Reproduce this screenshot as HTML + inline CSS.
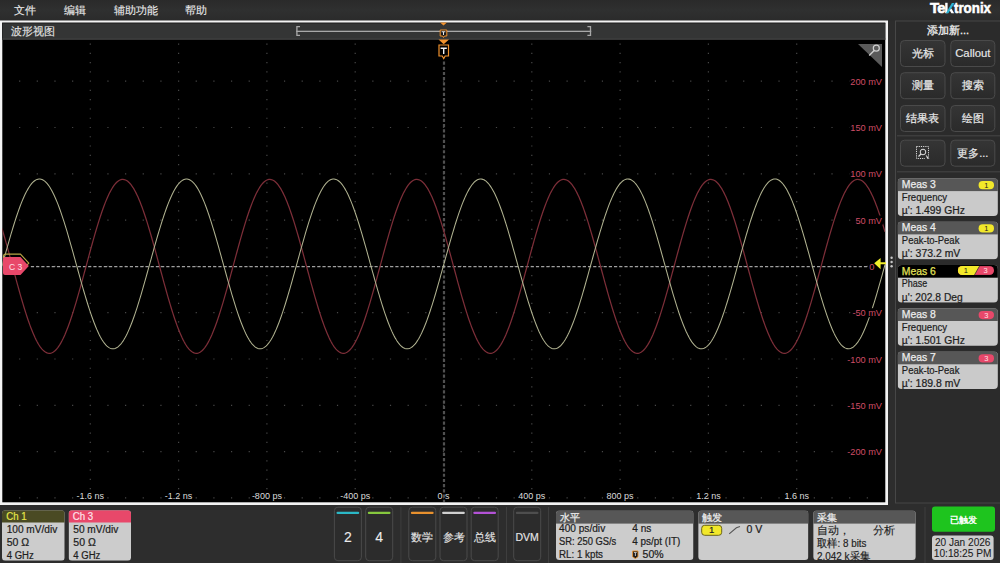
<!DOCTYPE html>
<html><head><meta charset="utf-8"><title>Tektronix scope</title>
<style>
*{margin:0;padding:0}
html,body{width:1000px;height:563px;overflow:hidden;background:#2d2d2d}
body{font-family:"Liberation Sans",sans-serif}
svg{display:block;position:absolute;left:0;top:0}
text{font-family:"Liberation Sans",sans-serif}
</style></head><body>
<svg width="1000" height="563" viewBox="0 0 1000 563" font-family="Liberation Sans, sans-serif"><defs>
<linearGradient id="gmenu" x1="0" y1="0" x2="0" y2="1"><stop offset="0" stop-color="#2a2a2a"/><stop offset="0.5" stop-color="#2f3030"/><stop offset="1" stop-color="#2b2b2b"/></linearGradient>
<linearGradient id="gbtn" x1="0" y1="0" x2="0" y2="1"><stop offset="0" stop-color="#353535"/><stop offset="1" stop-color="#2a2a2a"/></linearGradient>
<clipPath id="cgrat"><rect x="2.3" y="39.6" width="882.9" height="462.6"/></clipPath>
</defs>
<rect x="0" y="0" width="1000" height="563" fill="#2d2d2d"/>
<rect x="0" y="0" width="1000" height="20.5" fill="url(#gmenu)"/>
<text x="14.2" y="14.2" font-size="10.7" fill="#e8e8e8" stroke="#e8e8e8" stroke-width="0.12">文件</text>
<text x="64.2" y="14.2" font-size="10.7" fill="#e8e8e8" stroke="#e8e8e8" stroke-width="0.12">编辑</text>
<text x="114" y="14.2" font-size="10.7" fill="#e8e8e8" stroke="#e8e8e8" stroke-width="0.12">辅助功能</text>
<text x="184.8" y="14.2" font-size="10.7" fill="#e8e8e8" stroke="#e8e8e8" stroke-width="0.12">帮助</text>
<text x="929.9" y="13.2" font-size="15" fill="#ffffff" font-weight="bold" letter-spacing="-0.6" stroke="#ffffff" stroke-width="0.55">Te</text>
<rect x="945.2" y="2.8" width="2.4" height="10.4" fill="#ffffff"/>
<path d="M945.8 13.2H948.4L954.5 2.9H951.9Z" fill="#2ab4d4"/>
<path d="M949.6 10.2L951.4 8.4L954.2 13.2H951.4Z" fill="#ffffff"/>
<text x="954" y="13.2" font-size="15" fill="#ffffff" font-weight="bold" stroke="#ffffff" stroke-width="0.55" textLength="37" lengthAdjust="spacingAndGlyphs">tronix</text>
<rect x="0" y="20.5" width="888" height="484.5" fill="#f4f4f4"/>
<rect x="2.3" y="22.8" width="883" height="479.5" fill="#000"/>
<rect x="2.3" y="22.8" width="883" height="17" fill="#343535"/>
<rect x="2.3" y="22.8" width="883" height="0.6" fill="#1a1a1a"/>
<rect x="2.3" y="22.8" width="0.6" height="17" fill="#1a1a1a"/>
<rect x="2.3" y="38.4" width="883" height="1.2" fill="#3f3f3f"/>
<text x="10.6" y="34.9" font-size="11" fill="#e2e2e2" stroke="#e2e2e2" stroke-width="0.15">波形视图</text>
<rect x="296.2" y="30.7" width="295" height="1.3" fill="#a8a8a8"/>
<path d="M300 26.6H296.9V35.4H300M587.4 26.6H590.5V35.4H587.4" fill="none" stroke="#a8a8a8" stroke-width="1.3"/>
<path d="M440 22.6H447L443.5 25.6Z" fill="#f0922e"/>
<path d="M440.2 30H446.8V36H444.5L443.5 37.5L442.5 36H440.2Z" fill="#1a1a1a" stroke="#f0922e" stroke-width="1"/>
<path d="M441.6 31.3H445.4V32.2H444V35H443V32.2H441.6Z" fill="#e6e6e6"/>
<g clip-path="url(#cgrat)">
<path d="M1.4 43.56h1.2v1.2h-1.2zM1.4 52.82h1.2v1.2h-1.2zM1.4 62.08h1.2v1.2h-1.2zM1.4 71.34h1.2v1.2h-1.2zM1.4 80.6h1.2v1.2h-1.2zM1.4 89.86h1.2v1.2h-1.2zM1.4 99.12h1.2v1.2h-1.2zM1.4 108.38h1.2v1.2h-1.2zM1.4 117.64h1.2v1.2h-1.2zM1.4 126.9h1.2v1.2h-1.2zM1.4 136.16h1.2v1.2h-1.2zM1.4 145.42h1.2v1.2h-1.2zM1.4 154.68h1.2v1.2h-1.2zM1.4 163.94h1.2v1.2h-1.2zM1.4 173.2h1.2v1.2h-1.2zM1.4 182.46h1.2v1.2h-1.2zM1.4 191.72h1.2v1.2h-1.2zM1.4 200.98h1.2v1.2h-1.2zM1.4 210.24h1.2v1.2h-1.2zM1.4 219.5h1.2v1.2h-1.2zM1.4 228.76h1.2v1.2h-1.2zM1.4 238.02h1.2v1.2h-1.2zM1.4 247.28h1.2v1.2h-1.2zM1.4 256.54h1.2v1.2h-1.2zM1.4 265.8h1.2v1.2h-1.2zM1.4 275.06h1.2v1.2h-1.2zM1.4 284.32h1.2v1.2h-1.2zM1.4 293.58h1.2v1.2h-1.2zM1.4 302.84h1.2v1.2h-1.2zM1.4 312.1h1.2v1.2h-1.2zM1.4 321.36h1.2v1.2h-1.2zM1.4 330.62h1.2v1.2h-1.2zM1.4 339.88h1.2v1.2h-1.2zM1.4 349.14h1.2v1.2h-1.2zM1.4 358.4h1.2v1.2h-1.2zM1.4 367.66h1.2v1.2h-1.2zM1.4 376.92h1.2v1.2h-1.2zM1.4 386.18h1.2v1.2h-1.2zM1.4 395.44h1.2v1.2h-1.2zM1.4 404.7h1.2v1.2h-1.2zM1.4 413.96h1.2v1.2h-1.2zM1.4 423.22h1.2v1.2h-1.2zM1.4 432.48h1.2v1.2h-1.2zM1.4 441.74h1.2v1.2h-1.2zM1.4 451h1.2v1.2h-1.2zM1.4 460.26h1.2v1.2h-1.2zM1.4 469.52h1.2v1.2h-1.2zM1.4 478.78h1.2v1.2h-1.2zM1.4 488.04h1.2v1.2h-1.2zM1.4 497.3h1.2v1.2h-1.2zM19.06 80.6h1.2v1.2h-1.2zM19.06 126.9h1.2v1.2h-1.2zM19.06 173.2h1.2v1.2h-1.2zM19.06 219.5h1.2v1.2h-1.2zM19.06 265.8h1.2v1.2h-1.2zM19.06 312.1h1.2v1.2h-1.2zM19.06 358.4h1.2v1.2h-1.2zM19.06 404.7h1.2v1.2h-1.2zM19.06 451h1.2v1.2h-1.2zM19.06 497.3h1.2v1.2h-1.2zM36.72 80.6h1.2v1.2h-1.2zM36.72 126.9h1.2v1.2h-1.2zM36.72 173.2h1.2v1.2h-1.2zM36.72 219.5h1.2v1.2h-1.2zM36.72 265.8h1.2v1.2h-1.2zM36.72 312.1h1.2v1.2h-1.2zM36.72 358.4h1.2v1.2h-1.2zM36.72 404.7h1.2v1.2h-1.2zM36.72 451h1.2v1.2h-1.2zM36.72 497.3h1.2v1.2h-1.2zM54.38 80.6h1.2v1.2h-1.2zM54.38 126.9h1.2v1.2h-1.2zM54.38 173.2h1.2v1.2h-1.2zM54.38 219.5h1.2v1.2h-1.2zM54.38 265.8h1.2v1.2h-1.2zM54.38 312.1h1.2v1.2h-1.2zM54.38 358.4h1.2v1.2h-1.2zM54.38 404.7h1.2v1.2h-1.2zM54.38 451h1.2v1.2h-1.2zM54.38 497.3h1.2v1.2h-1.2zM72.04 80.6h1.2v1.2h-1.2zM72.04 126.9h1.2v1.2h-1.2zM72.04 173.2h1.2v1.2h-1.2zM72.04 219.5h1.2v1.2h-1.2zM72.04 265.8h1.2v1.2h-1.2zM72.04 312.1h1.2v1.2h-1.2zM72.04 358.4h1.2v1.2h-1.2zM72.04 404.7h1.2v1.2h-1.2zM72.04 451h1.2v1.2h-1.2zM72.04 497.3h1.2v1.2h-1.2zM89.7 43.56h1.2v1.2h-1.2zM89.7 52.82h1.2v1.2h-1.2zM89.7 62.08h1.2v1.2h-1.2zM89.7 71.34h1.2v1.2h-1.2zM89.7 80.6h1.2v1.2h-1.2zM89.7 89.86h1.2v1.2h-1.2zM89.7 99.12h1.2v1.2h-1.2zM89.7 108.38h1.2v1.2h-1.2zM89.7 117.64h1.2v1.2h-1.2zM89.7 126.9h1.2v1.2h-1.2zM89.7 136.16h1.2v1.2h-1.2zM89.7 145.42h1.2v1.2h-1.2zM89.7 154.68h1.2v1.2h-1.2zM89.7 163.94h1.2v1.2h-1.2zM89.7 173.2h1.2v1.2h-1.2zM89.7 182.46h1.2v1.2h-1.2zM89.7 191.72h1.2v1.2h-1.2zM89.7 200.98h1.2v1.2h-1.2zM89.7 210.24h1.2v1.2h-1.2zM89.7 219.5h1.2v1.2h-1.2zM89.7 228.76h1.2v1.2h-1.2zM89.7 238.02h1.2v1.2h-1.2zM89.7 247.28h1.2v1.2h-1.2zM89.7 256.54h1.2v1.2h-1.2zM89.7 265.8h1.2v1.2h-1.2zM89.7 275.06h1.2v1.2h-1.2zM89.7 284.32h1.2v1.2h-1.2zM89.7 293.58h1.2v1.2h-1.2zM89.7 302.84h1.2v1.2h-1.2zM89.7 312.1h1.2v1.2h-1.2zM89.7 321.36h1.2v1.2h-1.2zM89.7 330.62h1.2v1.2h-1.2zM89.7 339.88h1.2v1.2h-1.2zM89.7 349.14h1.2v1.2h-1.2zM89.7 358.4h1.2v1.2h-1.2zM89.7 367.66h1.2v1.2h-1.2zM89.7 376.92h1.2v1.2h-1.2zM89.7 386.18h1.2v1.2h-1.2zM89.7 395.44h1.2v1.2h-1.2zM89.7 404.7h1.2v1.2h-1.2zM89.7 413.96h1.2v1.2h-1.2zM89.7 423.22h1.2v1.2h-1.2zM89.7 432.48h1.2v1.2h-1.2zM89.7 441.74h1.2v1.2h-1.2zM89.7 451h1.2v1.2h-1.2zM89.7 460.26h1.2v1.2h-1.2zM89.7 469.52h1.2v1.2h-1.2zM89.7 478.78h1.2v1.2h-1.2zM89.7 488.04h1.2v1.2h-1.2zM89.7 497.3h1.2v1.2h-1.2zM107.36 80.6h1.2v1.2h-1.2zM107.36 126.9h1.2v1.2h-1.2zM107.36 173.2h1.2v1.2h-1.2zM107.36 219.5h1.2v1.2h-1.2zM107.36 265.8h1.2v1.2h-1.2zM107.36 312.1h1.2v1.2h-1.2zM107.36 358.4h1.2v1.2h-1.2zM107.36 404.7h1.2v1.2h-1.2zM107.36 451h1.2v1.2h-1.2zM107.36 497.3h1.2v1.2h-1.2zM125.02 80.6h1.2v1.2h-1.2zM125.02 126.9h1.2v1.2h-1.2zM125.02 173.2h1.2v1.2h-1.2zM125.02 219.5h1.2v1.2h-1.2zM125.02 265.8h1.2v1.2h-1.2zM125.02 312.1h1.2v1.2h-1.2zM125.02 358.4h1.2v1.2h-1.2zM125.02 404.7h1.2v1.2h-1.2zM125.02 451h1.2v1.2h-1.2zM125.02 497.3h1.2v1.2h-1.2zM142.68 80.6h1.2v1.2h-1.2zM142.68 126.9h1.2v1.2h-1.2zM142.68 173.2h1.2v1.2h-1.2zM142.68 219.5h1.2v1.2h-1.2zM142.68 265.8h1.2v1.2h-1.2zM142.68 312.1h1.2v1.2h-1.2zM142.68 358.4h1.2v1.2h-1.2zM142.68 404.7h1.2v1.2h-1.2zM142.68 451h1.2v1.2h-1.2zM142.68 497.3h1.2v1.2h-1.2zM160.34 80.6h1.2v1.2h-1.2zM160.34 126.9h1.2v1.2h-1.2zM160.34 173.2h1.2v1.2h-1.2zM160.34 219.5h1.2v1.2h-1.2zM160.34 265.8h1.2v1.2h-1.2zM160.34 312.1h1.2v1.2h-1.2zM160.34 358.4h1.2v1.2h-1.2zM160.34 404.7h1.2v1.2h-1.2zM160.34 451h1.2v1.2h-1.2zM160.34 497.3h1.2v1.2h-1.2zM178 43.56h1.2v1.2h-1.2zM178 52.82h1.2v1.2h-1.2zM178 62.08h1.2v1.2h-1.2zM178 71.34h1.2v1.2h-1.2zM178 80.6h1.2v1.2h-1.2zM178 89.86h1.2v1.2h-1.2zM178 99.12h1.2v1.2h-1.2zM178 108.38h1.2v1.2h-1.2zM178 117.64h1.2v1.2h-1.2zM178 126.9h1.2v1.2h-1.2zM178 136.16h1.2v1.2h-1.2zM178 145.42h1.2v1.2h-1.2zM178 154.68h1.2v1.2h-1.2zM178 163.94h1.2v1.2h-1.2zM178 173.2h1.2v1.2h-1.2zM178 182.46h1.2v1.2h-1.2zM178 191.72h1.2v1.2h-1.2zM178 200.98h1.2v1.2h-1.2zM178 210.24h1.2v1.2h-1.2zM178 219.5h1.2v1.2h-1.2zM178 228.76h1.2v1.2h-1.2zM178 238.02h1.2v1.2h-1.2zM178 247.28h1.2v1.2h-1.2zM178 256.54h1.2v1.2h-1.2zM178 265.8h1.2v1.2h-1.2zM178 275.06h1.2v1.2h-1.2zM178 284.32h1.2v1.2h-1.2zM178 293.58h1.2v1.2h-1.2zM178 302.84h1.2v1.2h-1.2zM178 312.1h1.2v1.2h-1.2zM178 321.36h1.2v1.2h-1.2zM178 330.62h1.2v1.2h-1.2zM178 339.88h1.2v1.2h-1.2zM178 349.14h1.2v1.2h-1.2zM178 358.4h1.2v1.2h-1.2zM178 367.66h1.2v1.2h-1.2zM178 376.92h1.2v1.2h-1.2zM178 386.18h1.2v1.2h-1.2zM178 395.44h1.2v1.2h-1.2zM178 404.7h1.2v1.2h-1.2zM178 413.96h1.2v1.2h-1.2zM178 423.22h1.2v1.2h-1.2zM178 432.48h1.2v1.2h-1.2zM178 441.74h1.2v1.2h-1.2zM178 451h1.2v1.2h-1.2zM178 460.26h1.2v1.2h-1.2zM178 469.52h1.2v1.2h-1.2zM178 478.78h1.2v1.2h-1.2zM178 488.04h1.2v1.2h-1.2zM178 497.3h1.2v1.2h-1.2zM195.66 80.6h1.2v1.2h-1.2zM195.66 126.9h1.2v1.2h-1.2zM195.66 173.2h1.2v1.2h-1.2zM195.66 219.5h1.2v1.2h-1.2zM195.66 265.8h1.2v1.2h-1.2zM195.66 312.1h1.2v1.2h-1.2zM195.66 358.4h1.2v1.2h-1.2zM195.66 404.7h1.2v1.2h-1.2zM195.66 451h1.2v1.2h-1.2zM195.66 497.3h1.2v1.2h-1.2zM213.32 80.6h1.2v1.2h-1.2zM213.32 126.9h1.2v1.2h-1.2zM213.32 173.2h1.2v1.2h-1.2zM213.32 219.5h1.2v1.2h-1.2zM213.32 265.8h1.2v1.2h-1.2zM213.32 312.1h1.2v1.2h-1.2zM213.32 358.4h1.2v1.2h-1.2zM213.32 404.7h1.2v1.2h-1.2zM213.32 451h1.2v1.2h-1.2zM213.32 497.3h1.2v1.2h-1.2zM230.98 80.6h1.2v1.2h-1.2zM230.98 126.9h1.2v1.2h-1.2zM230.98 173.2h1.2v1.2h-1.2zM230.98 219.5h1.2v1.2h-1.2zM230.98 265.8h1.2v1.2h-1.2zM230.98 312.1h1.2v1.2h-1.2zM230.98 358.4h1.2v1.2h-1.2zM230.98 404.7h1.2v1.2h-1.2zM230.98 451h1.2v1.2h-1.2zM230.98 497.3h1.2v1.2h-1.2zM248.64 80.6h1.2v1.2h-1.2zM248.64 126.9h1.2v1.2h-1.2zM248.64 173.2h1.2v1.2h-1.2zM248.64 219.5h1.2v1.2h-1.2zM248.64 265.8h1.2v1.2h-1.2zM248.64 312.1h1.2v1.2h-1.2zM248.64 358.4h1.2v1.2h-1.2zM248.64 404.7h1.2v1.2h-1.2zM248.64 451h1.2v1.2h-1.2zM248.64 497.3h1.2v1.2h-1.2zM266.3 43.56h1.2v1.2h-1.2zM266.3 52.82h1.2v1.2h-1.2zM266.3 62.08h1.2v1.2h-1.2zM266.3 71.34h1.2v1.2h-1.2zM266.3 80.6h1.2v1.2h-1.2zM266.3 89.86h1.2v1.2h-1.2zM266.3 99.12h1.2v1.2h-1.2zM266.3 108.38h1.2v1.2h-1.2zM266.3 117.64h1.2v1.2h-1.2zM266.3 126.9h1.2v1.2h-1.2zM266.3 136.16h1.2v1.2h-1.2zM266.3 145.42h1.2v1.2h-1.2zM266.3 154.68h1.2v1.2h-1.2zM266.3 163.94h1.2v1.2h-1.2zM266.3 173.2h1.2v1.2h-1.2zM266.3 182.46h1.2v1.2h-1.2zM266.3 191.72h1.2v1.2h-1.2zM266.3 200.98h1.2v1.2h-1.2zM266.3 210.24h1.2v1.2h-1.2zM266.3 219.5h1.2v1.2h-1.2zM266.3 228.76h1.2v1.2h-1.2zM266.3 238.02h1.2v1.2h-1.2zM266.3 247.28h1.2v1.2h-1.2zM266.3 256.54h1.2v1.2h-1.2zM266.3 265.8h1.2v1.2h-1.2zM266.3 275.06h1.2v1.2h-1.2zM266.3 284.32h1.2v1.2h-1.2zM266.3 293.58h1.2v1.2h-1.2zM266.3 302.84h1.2v1.2h-1.2zM266.3 312.1h1.2v1.2h-1.2zM266.3 321.36h1.2v1.2h-1.2zM266.3 330.62h1.2v1.2h-1.2zM266.3 339.88h1.2v1.2h-1.2zM266.3 349.14h1.2v1.2h-1.2zM266.3 358.4h1.2v1.2h-1.2zM266.3 367.66h1.2v1.2h-1.2zM266.3 376.92h1.2v1.2h-1.2zM266.3 386.18h1.2v1.2h-1.2zM266.3 395.44h1.2v1.2h-1.2zM266.3 404.7h1.2v1.2h-1.2zM266.3 413.96h1.2v1.2h-1.2zM266.3 423.22h1.2v1.2h-1.2zM266.3 432.48h1.2v1.2h-1.2zM266.3 441.74h1.2v1.2h-1.2zM266.3 451h1.2v1.2h-1.2zM266.3 460.26h1.2v1.2h-1.2zM266.3 469.52h1.2v1.2h-1.2zM266.3 478.78h1.2v1.2h-1.2zM266.3 488.04h1.2v1.2h-1.2zM266.3 497.3h1.2v1.2h-1.2zM283.96 80.6h1.2v1.2h-1.2zM283.96 126.9h1.2v1.2h-1.2zM283.96 173.2h1.2v1.2h-1.2zM283.96 219.5h1.2v1.2h-1.2zM283.96 265.8h1.2v1.2h-1.2zM283.96 312.1h1.2v1.2h-1.2zM283.96 358.4h1.2v1.2h-1.2zM283.96 404.7h1.2v1.2h-1.2zM283.96 451h1.2v1.2h-1.2zM283.96 497.3h1.2v1.2h-1.2zM301.62 80.6h1.2v1.2h-1.2zM301.62 126.9h1.2v1.2h-1.2zM301.62 173.2h1.2v1.2h-1.2zM301.62 219.5h1.2v1.2h-1.2zM301.62 265.8h1.2v1.2h-1.2zM301.62 312.1h1.2v1.2h-1.2zM301.62 358.4h1.2v1.2h-1.2zM301.62 404.7h1.2v1.2h-1.2zM301.62 451h1.2v1.2h-1.2zM301.62 497.3h1.2v1.2h-1.2zM319.28 80.6h1.2v1.2h-1.2zM319.28 126.9h1.2v1.2h-1.2zM319.28 173.2h1.2v1.2h-1.2zM319.28 219.5h1.2v1.2h-1.2zM319.28 265.8h1.2v1.2h-1.2zM319.28 312.1h1.2v1.2h-1.2zM319.28 358.4h1.2v1.2h-1.2zM319.28 404.7h1.2v1.2h-1.2zM319.28 451h1.2v1.2h-1.2zM319.28 497.3h1.2v1.2h-1.2zM336.94 80.6h1.2v1.2h-1.2zM336.94 126.9h1.2v1.2h-1.2zM336.94 173.2h1.2v1.2h-1.2zM336.94 219.5h1.2v1.2h-1.2zM336.94 265.8h1.2v1.2h-1.2zM336.94 312.1h1.2v1.2h-1.2zM336.94 358.4h1.2v1.2h-1.2zM336.94 404.7h1.2v1.2h-1.2zM336.94 451h1.2v1.2h-1.2zM336.94 497.3h1.2v1.2h-1.2zM354.6 43.56h1.2v1.2h-1.2zM354.6 52.82h1.2v1.2h-1.2zM354.6 62.08h1.2v1.2h-1.2zM354.6 71.34h1.2v1.2h-1.2zM354.6 80.6h1.2v1.2h-1.2zM354.6 89.86h1.2v1.2h-1.2zM354.6 99.12h1.2v1.2h-1.2zM354.6 108.38h1.2v1.2h-1.2zM354.6 117.64h1.2v1.2h-1.2zM354.6 126.9h1.2v1.2h-1.2zM354.6 136.16h1.2v1.2h-1.2zM354.6 145.42h1.2v1.2h-1.2zM354.6 154.68h1.2v1.2h-1.2zM354.6 163.94h1.2v1.2h-1.2zM354.6 173.2h1.2v1.2h-1.2zM354.6 182.46h1.2v1.2h-1.2zM354.6 191.72h1.2v1.2h-1.2zM354.6 200.98h1.2v1.2h-1.2zM354.6 210.24h1.2v1.2h-1.2zM354.6 219.5h1.2v1.2h-1.2zM354.6 228.76h1.2v1.2h-1.2zM354.6 238.02h1.2v1.2h-1.2zM354.6 247.28h1.2v1.2h-1.2zM354.6 256.54h1.2v1.2h-1.2zM354.6 265.8h1.2v1.2h-1.2zM354.6 275.06h1.2v1.2h-1.2zM354.6 284.32h1.2v1.2h-1.2zM354.6 293.58h1.2v1.2h-1.2zM354.6 302.84h1.2v1.2h-1.2zM354.6 312.1h1.2v1.2h-1.2zM354.6 321.36h1.2v1.2h-1.2zM354.6 330.62h1.2v1.2h-1.2zM354.6 339.88h1.2v1.2h-1.2zM354.6 349.14h1.2v1.2h-1.2zM354.6 358.4h1.2v1.2h-1.2zM354.6 367.66h1.2v1.2h-1.2zM354.6 376.92h1.2v1.2h-1.2zM354.6 386.18h1.2v1.2h-1.2zM354.6 395.44h1.2v1.2h-1.2zM354.6 404.7h1.2v1.2h-1.2zM354.6 413.96h1.2v1.2h-1.2zM354.6 423.22h1.2v1.2h-1.2zM354.6 432.48h1.2v1.2h-1.2zM354.6 441.74h1.2v1.2h-1.2zM354.6 451h1.2v1.2h-1.2zM354.6 460.26h1.2v1.2h-1.2zM354.6 469.52h1.2v1.2h-1.2zM354.6 478.78h1.2v1.2h-1.2zM354.6 488.04h1.2v1.2h-1.2zM354.6 497.3h1.2v1.2h-1.2zM372.26 80.6h1.2v1.2h-1.2zM372.26 126.9h1.2v1.2h-1.2zM372.26 173.2h1.2v1.2h-1.2zM372.26 219.5h1.2v1.2h-1.2zM372.26 265.8h1.2v1.2h-1.2zM372.26 312.1h1.2v1.2h-1.2zM372.26 358.4h1.2v1.2h-1.2zM372.26 404.7h1.2v1.2h-1.2zM372.26 451h1.2v1.2h-1.2zM372.26 497.3h1.2v1.2h-1.2zM389.92 80.6h1.2v1.2h-1.2zM389.92 126.9h1.2v1.2h-1.2zM389.92 173.2h1.2v1.2h-1.2zM389.92 219.5h1.2v1.2h-1.2zM389.92 265.8h1.2v1.2h-1.2zM389.92 312.1h1.2v1.2h-1.2zM389.92 358.4h1.2v1.2h-1.2zM389.92 404.7h1.2v1.2h-1.2zM389.92 451h1.2v1.2h-1.2zM389.92 497.3h1.2v1.2h-1.2zM407.58 80.6h1.2v1.2h-1.2zM407.58 126.9h1.2v1.2h-1.2zM407.58 173.2h1.2v1.2h-1.2zM407.58 219.5h1.2v1.2h-1.2zM407.58 265.8h1.2v1.2h-1.2zM407.58 312.1h1.2v1.2h-1.2zM407.58 358.4h1.2v1.2h-1.2zM407.58 404.7h1.2v1.2h-1.2zM407.58 451h1.2v1.2h-1.2zM407.58 497.3h1.2v1.2h-1.2zM425.24 80.6h1.2v1.2h-1.2zM425.24 126.9h1.2v1.2h-1.2zM425.24 173.2h1.2v1.2h-1.2zM425.24 219.5h1.2v1.2h-1.2zM425.24 265.8h1.2v1.2h-1.2zM425.24 312.1h1.2v1.2h-1.2zM425.24 358.4h1.2v1.2h-1.2zM425.24 404.7h1.2v1.2h-1.2zM425.24 451h1.2v1.2h-1.2zM425.24 497.3h1.2v1.2h-1.2zM442.9 80.6h1.2v1.2h-1.2zM442.9 126.9h1.2v1.2h-1.2zM442.9 173.2h1.2v1.2h-1.2zM442.9 219.5h1.2v1.2h-1.2zM442.9 265.8h1.2v1.2h-1.2zM442.9 312.1h1.2v1.2h-1.2zM442.9 358.4h1.2v1.2h-1.2zM442.9 404.7h1.2v1.2h-1.2zM442.9 451h1.2v1.2h-1.2zM442.9 497.3h1.2v1.2h-1.2zM460.56 80.6h1.2v1.2h-1.2zM460.56 126.9h1.2v1.2h-1.2zM460.56 173.2h1.2v1.2h-1.2zM460.56 219.5h1.2v1.2h-1.2zM460.56 265.8h1.2v1.2h-1.2zM460.56 312.1h1.2v1.2h-1.2zM460.56 358.4h1.2v1.2h-1.2zM460.56 404.7h1.2v1.2h-1.2zM460.56 451h1.2v1.2h-1.2zM460.56 497.3h1.2v1.2h-1.2zM478.22 80.6h1.2v1.2h-1.2zM478.22 126.9h1.2v1.2h-1.2zM478.22 173.2h1.2v1.2h-1.2zM478.22 219.5h1.2v1.2h-1.2zM478.22 265.8h1.2v1.2h-1.2zM478.22 312.1h1.2v1.2h-1.2zM478.22 358.4h1.2v1.2h-1.2zM478.22 404.7h1.2v1.2h-1.2zM478.22 451h1.2v1.2h-1.2zM478.22 497.3h1.2v1.2h-1.2zM495.88 80.6h1.2v1.2h-1.2zM495.88 126.9h1.2v1.2h-1.2zM495.88 173.2h1.2v1.2h-1.2zM495.88 219.5h1.2v1.2h-1.2zM495.88 265.8h1.2v1.2h-1.2zM495.88 312.1h1.2v1.2h-1.2zM495.88 358.4h1.2v1.2h-1.2zM495.88 404.7h1.2v1.2h-1.2zM495.88 451h1.2v1.2h-1.2zM495.88 497.3h1.2v1.2h-1.2zM513.54 80.6h1.2v1.2h-1.2zM513.54 126.9h1.2v1.2h-1.2zM513.54 173.2h1.2v1.2h-1.2zM513.54 219.5h1.2v1.2h-1.2zM513.54 265.8h1.2v1.2h-1.2zM513.54 312.1h1.2v1.2h-1.2zM513.54 358.4h1.2v1.2h-1.2zM513.54 404.7h1.2v1.2h-1.2zM513.54 451h1.2v1.2h-1.2zM513.54 497.3h1.2v1.2h-1.2zM531.2 43.56h1.2v1.2h-1.2zM531.2 52.82h1.2v1.2h-1.2zM531.2 62.08h1.2v1.2h-1.2zM531.2 71.34h1.2v1.2h-1.2zM531.2 80.6h1.2v1.2h-1.2zM531.2 89.86h1.2v1.2h-1.2zM531.2 99.12h1.2v1.2h-1.2zM531.2 108.38h1.2v1.2h-1.2zM531.2 117.64h1.2v1.2h-1.2zM531.2 126.9h1.2v1.2h-1.2zM531.2 136.16h1.2v1.2h-1.2zM531.2 145.42h1.2v1.2h-1.2zM531.2 154.68h1.2v1.2h-1.2zM531.2 163.94h1.2v1.2h-1.2zM531.2 173.2h1.2v1.2h-1.2zM531.2 182.46h1.2v1.2h-1.2zM531.2 191.72h1.2v1.2h-1.2zM531.2 200.98h1.2v1.2h-1.2zM531.2 210.24h1.2v1.2h-1.2zM531.2 219.5h1.2v1.2h-1.2zM531.2 228.76h1.2v1.2h-1.2zM531.2 238.02h1.2v1.2h-1.2zM531.2 247.28h1.2v1.2h-1.2zM531.2 256.54h1.2v1.2h-1.2zM531.2 265.8h1.2v1.2h-1.2zM531.2 275.06h1.2v1.2h-1.2zM531.2 284.32h1.2v1.2h-1.2zM531.2 293.58h1.2v1.2h-1.2zM531.2 302.84h1.2v1.2h-1.2zM531.2 312.1h1.2v1.2h-1.2zM531.2 321.36h1.2v1.2h-1.2zM531.2 330.62h1.2v1.2h-1.2zM531.2 339.88h1.2v1.2h-1.2zM531.2 349.14h1.2v1.2h-1.2zM531.2 358.4h1.2v1.2h-1.2zM531.2 367.66h1.2v1.2h-1.2zM531.2 376.92h1.2v1.2h-1.2zM531.2 386.18h1.2v1.2h-1.2zM531.2 395.44h1.2v1.2h-1.2zM531.2 404.7h1.2v1.2h-1.2zM531.2 413.96h1.2v1.2h-1.2zM531.2 423.22h1.2v1.2h-1.2zM531.2 432.48h1.2v1.2h-1.2zM531.2 441.74h1.2v1.2h-1.2zM531.2 451h1.2v1.2h-1.2zM531.2 460.26h1.2v1.2h-1.2zM531.2 469.52h1.2v1.2h-1.2zM531.2 478.78h1.2v1.2h-1.2zM531.2 488.04h1.2v1.2h-1.2zM531.2 497.3h1.2v1.2h-1.2zM548.86 80.6h1.2v1.2h-1.2zM548.86 126.9h1.2v1.2h-1.2zM548.86 173.2h1.2v1.2h-1.2zM548.86 219.5h1.2v1.2h-1.2zM548.86 265.8h1.2v1.2h-1.2zM548.86 312.1h1.2v1.2h-1.2zM548.86 358.4h1.2v1.2h-1.2zM548.86 404.7h1.2v1.2h-1.2zM548.86 451h1.2v1.2h-1.2zM548.86 497.3h1.2v1.2h-1.2zM566.52 80.6h1.2v1.2h-1.2zM566.52 126.9h1.2v1.2h-1.2zM566.52 173.2h1.2v1.2h-1.2zM566.52 219.5h1.2v1.2h-1.2zM566.52 265.8h1.2v1.2h-1.2zM566.52 312.1h1.2v1.2h-1.2zM566.52 358.4h1.2v1.2h-1.2zM566.52 404.7h1.2v1.2h-1.2zM566.52 451h1.2v1.2h-1.2zM566.52 497.3h1.2v1.2h-1.2zM584.18 80.6h1.2v1.2h-1.2zM584.18 126.9h1.2v1.2h-1.2zM584.18 173.2h1.2v1.2h-1.2zM584.18 219.5h1.2v1.2h-1.2zM584.18 265.8h1.2v1.2h-1.2zM584.18 312.1h1.2v1.2h-1.2zM584.18 358.4h1.2v1.2h-1.2zM584.18 404.7h1.2v1.2h-1.2zM584.18 451h1.2v1.2h-1.2zM584.18 497.3h1.2v1.2h-1.2zM601.84 80.6h1.2v1.2h-1.2zM601.84 126.9h1.2v1.2h-1.2zM601.84 173.2h1.2v1.2h-1.2zM601.84 219.5h1.2v1.2h-1.2zM601.84 265.8h1.2v1.2h-1.2zM601.84 312.1h1.2v1.2h-1.2zM601.84 358.4h1.2v1.2h-1.2zM601.84 404.7h1.2v1.2h-1.2zM601.84 451h1.2v1.2h-1.2zM601.84 497.3h1.2v1.2h-1.2zM619.5 43.56h1.2v1.2h-1.2zM619.5 52.82h1.2v1.2h-1.2zM619.5 62.08h1.2v1.2h-1.2zM619.5 71.34h1.2v1.2h-1.2zM619.5 80.6h1.2v1.2h-1.2zM619.5 89.86h1.2v1.2h-1.2zM619.5 99.12h1.2v1.2h-1.2zM619.5 108.38h1.2v1.2h-1.2zM619.5 117.64h1.2v1.2h-1.2zM619.5 126.9h1.2v1.2h-1.2zM619.5 136.16h1.2v1.2h-1.2zM619.5 145.42h1.2v1.2h-1.2zM619.5 154.68h1.2v1.2h-1.2zM619.5 163.94h1.2v1.2h-1.2zM619.5 173.2h1.2v1.2h-1.2zM619.5 182.46h1.2v1.2h-1.2zM619.5 191.72h1.2v1.2h-1.2zM619.5 200.98h1.2v1.2h-1.2zM619.5 210.24h1.2v1.2h-1.2zM619.5 219.5h1.2v1.2h-1.2zM619.5 228.76h1.2v1.2h-1.2zM619.5 238.02h1.2v1.2h-1.2zM619.5 247.28h1.2v1.2h-1.2zM619.5 256.54h1.2v1.2h-1.2zM619.5 265.8h1.2v1.2h-1.2zM619.5 275.06h1.2v1.2h-1.2zM619.5 284.32h1.2v1.2h-1.2zM619.5 293.58h1.2v1.2h-1.2zM619.5 302.84h1.2v1.2h-1.2zM619.5 312.1h1.2v1.2h-1.2zM619.5 321.36h1.2v1.2h-1.2zM619.5 330.62h1.2v1.2h-1.2zM619.5 339.88h1.2v1.2h-1.2zM619.5 349.14h1.2v1.2h-1.2zM619.5 358.4h1.2v1.2h-1.2zM619.5 367.66h1.2v1.2h-1.2zM619.5 376.92h1.2v1.2h-1.2zM619.5 386.18h1.2v1.2h-1.2zM619.5 395.44h1.2v1.2h-1.2zM619.5 404.7h1.2v1.2h-1.2zM619.5 413.96h1.2v1.2h-1.2zM619.5 423.22h1.2v1.2h-1.2zM619.5 432.48h1.2v1.2h-1.2zM619.5 441.74h1.2v1.2h-1.2zM619.5 451h1.2v1.2h-1.2zM619.5 460.26h1.2v1.2h-1.2zM619.5 469.52h1.2v1.2h-1.2zM619.5 478.78h1.2v1.2h-1.2zM619.5 488.04h1.2v1.2h-1.2zM619.5 497.3h1.2v1.2h-1.2zM637.16 80.6h1.2v1.2h-1.2zM637.16 126.9h1.2v1.2h-1.2zM637.16 173.2h1.2v1.2h-1.2zM637.16 219.5h1.2v1.2h-1.2zM637.16 265.8h1.2v1.2h-1.2zM637.16 312.1h1.2v1.2h-1.2zM637.16 358.4h1.2v1.2h-1.2zM637.16 404.7h1.2v1.2h-1.2zM637.16 451h1.2v1.2h-1.2zM637.16 497.3h1.2v1.2h-1.2zM654.82 80.6h1.2v1.2h-1.2zM654.82 126.9h1.2v1.2h-1.2zM654.82 173.2h1.2v1.2h-1.2zM654.82 219.5h1.2v1.2h-1.2zM654.82 265.8h1.2v1.2h-1.2zM654.82 312.1h1.2v1.2h-1.2zM654.82 358.4h1.2v1.2h-1.2zM654.82 404.7h1.2v1.2h-1.2zM654.82 451h1.2v1.2h-1.2zM654.82 497.3h1.2v1.2h-1.2zM672.48 80.6h1.2v1.2h-1.2zM672.48 126.9h1.2v1.2h-1.2zM672.48 173.2h1.2v1.2h-1.2zM672.48 219.5h1.2v1.2h-1.2zM672.48 265.8h1.2v1.2h-1.2zM672.48 312.1h1.2v1.2h-1.2zM672.48 358.4h1.2v1.2h-1.2zM672.48 404.7h1.2v1.2h-1.2zM672.48 451h1.2v1.2h-1.2zM672.48 497.3h1.2v1.2h-1.2zM690.14 80.6h1.2v1.2h-1.2zM690.14 126.9h1.2v1.2h-1.2zM690.14 173.2h1.2v1.2h-1.2zM690.14 219.5h1.2v1.2h-1.2zM690.14 265.8h1.2v1.2h-1.2zM690.14 312.1h1.2v1.2h-1.2zM690.14 358.4h1.2v1.2h-1.2zM690.14 404.7h1.2v1.2h-1.2zM690.14 451h1.2v1.2h-1.2zM690.14 497.3h1.2v1.2h-1.2zM707.8 43.56h1.2v1.2h-1.2zM707.8 52.82h1.2v1.2h-1.2zM707.8 62.08h1.2v1.2h-1.2zM707.8 71.34h1.2v1.2h-1.2zM707.8 80.6h1.2v1.2h-1.2zM707.8 89.86h1.2v1.2h-1.2zM707.8 99.12h1.2v1.2h-1.2zM707.8 108.38h1.2v1.2h-1.2zM707.8 117.64h1.2v1.2h-1.2zM707.8 126.9h1.2v1.2h-1.2zM707.8 136.16h1.2v1.2h-1.2zM707.8 145.42h1.2v1.2h-1.2zM707.8 154.68h1.2v1.2h-1.2zM707.8 163.94h1.2v1.2h-1.2zM707.8 173.2h1.2v1.2h-1.2zM707.8 182.46h1.2v1.2h-1.2zM707.8 191.72h1.2v1.2h-1.2zM707.8 200.98h1.2v1.2h-1.2zM707.8 210.24h1.2v1.2h-1.2zM707.8 219.5h1.2v1.2h-1.2zM707.8 228.76h1.2v1.2h-1.2zM707.8 238.02h1.2v1.2h-1.2zM707.8 247.28h1.2v1.2h-1.2zM707.8 256.54h1.2v1.2h-1.2zM707.8 265.8h1.2v1.2h-1.2zM707.8 275.06h1.2v1.2h-1.2zM707.8 284.32h1.2v1.2h-1.2zM707.8 293.58h1.2v1.2h-1.2zM707.8 302.84h1.2v1.2h-1.2zM707.8 312.1h1.2v1.2h-1.2zM707.8 321.36h1.2v1.2h-1.2zM707.8 330.62h1.2v1.2h-1.2zM707.8 339.88h1.2v1.2h-1.2zM707.8 349.14h1.2v1.2h-1.2zM707.8 358.4h1.2v1.2h-1.2zM707.8 367.66h1.2v1.2h-1.2zM707.8 376.92h1.2v1.2h-1.2zM707.8 386.18h1.2v1.2h-1.2zM707.8 395.44h1.2v1.2h-1.2zM707.8 404.7h1.2v1.2h-1.2zM707.8 413.96h1.2v1.2h-1.2zM707.8 423.22h1.2v1.2h-1.2zM707.8 432.48h1.2v1.2h-1.2zM707.8 441.74h1.2v1.2h-1.2zM707.8 451h1.2v1.2h-1.2zM707.8 460.26h1.2v1.2h-1.2zM707.8 469.52h1.2v1.2h-1.2zM707.8 478.78h1.2v1.2h-1.2zM707.8 488.04h1.2v1.2h-1.2zM707.8 497.3h1.2v1.2h-1.2zM725.46 80.6h1.2v1.2h-1.2zM725.46 126.9h1.2v1.2h-1.2zM725.46 173.2h1.2v1.2h-1.2zM725.46 219.5h1.2v1.2h-1.2zM725.46 265.8h1.2v1.2h-1.2zM725.46 312.1h1.2v1.2h-1.2zM725.46 358.4h1.2v1.2h-1.2zM725.46 404.7h1.2v1.2h-1.2zM725.46 451h1.2v1.2h-1.2zM725.46 497.3h1.2v1.2h-1.2zM743.12 80.6h1.2v1.2h-1.2zM743.12 126.9h1.2v1.2h-1.2zM743.12 173.2h1.2v1.2h-1.2zM743.12 219.5h1.2v1.2h-1.2zM743.12 265.8h1.2v1.2h-1.2zM743.12 312.1h1.2v1.2h-1.2zM743.12 358.4h1.2v1.2h-1.2zM743.12 404.7h1.2v1.2h-1.2zM743.12 451h1.2v1.2h-1.2zM743.12 497.3h1.2v1.2h-1.2zM760.78 80.6h1.2v1.2h-1.2zM760.78 126.9h1.2v1.2h-1.2zM760.78 173.2h1.2v1.2h-1.2zM760.78 219.5h1.2v1.2h-1.2zM760.78 265.8h1.2v1.2h-1.2zM760.78 312.1h1.2v1.2h-1.2zM760.78 358.4h1.2v1.2h-1.2zM760.78 404.7h1.2v1.2h-1.2zM760.78 451h1.2v1.2h-1.2zM760.78 497.3h1.2v1.2h-1.2zM778.44 80.6h1.2v1.2h-1.2zM778.44 126.9h1.2v1.2h-1.2zM778.44 173.2h1.2v1.2h-1.2zM778.44 219.5h1.2v1.2h-1.2zM778.44 265.8h1.2v1.2h-1.2zM778.44 312.1h1.2v1.2h-1.2zM778.44 358.4h1.2v1.2h-1.2zM778.44 404.7h1.2v1.2h-1.2zM778.44 451h1.2v1.2h-1.2zM778.44 497.3h1.2v1.2h-1.2zM796.1 43.56h1.2v1.2h-1.2zM796.1 52.82h1.2v1.2h-1.2zM796.1 62.08h1.2v1.2h-1.2zM796.1 71.34h1.2v1.2h-1.2zM796.1 80.6h1.2v1.2h-1.2zM796.1 89.86h1.2v1.2h-1.2zM796.1 99.12h1.2v1.2h-1.2zM796.1 108.38h1.2v1.2h-1.2zM796.1 117.64h1.2v1.2h-1.2zM796.1 126.9h1.2v1.2h-1.2zM796.1 136.16h1.2v1.2h-1.2zM796.1 145.42h1.2v1.2h-1.2zM796.1 154.68h1.2v1.2h-1.2zM796.1 163.94h1.2v1.2h-1.2zM796.1 173.2h1.2v1.2h-1.2zM796.1 182.46h1.2v1.2h-1.2zM796.1 191.72h1.2v1.2h-1.2zM796.1 200.98h1.2v1.2h-1.2zM796.1 210.24h1.2v1.2h-1.2zM796.1 219.5h1.2v1.2h-1.2zM796.1 228.76h1.2v1.2h-1.2zM796.1 238.02h1.2v1.2h-1.2zM796.1 247.28h1.2v1.2h-1.2zM796.1 256.54h1.2v1.2h-1.2zM796.1 265.8h1.2v1.2h-1.2zM796.1 275.06h1.2v1.2h-1.2zM796.1 284.32h1.2v1.2h-1.2zM796.1 293.58h1.2v1.2h-1.2zM796.1 302.84h1.2v1.2h-1.2zM796.1 312.1h1.2v1.2h-1.2zM796.1 321.36h1.2v1.2h-1.2zM796.1 330.62h1.2v1.2h-1.2zM796.1 339.88h1.2v1.2h-1.2zM796.1 349.14h1.2v1.2h-1.2zM796.1 358.4h1.2v1.2h-1.2zM796.1 367.66h1.2v1.2h-1.2zM796.1 376.92h1.2v1.2h-1.2zM796.1 386.18h1.2v1.2h-1.2zM796.1 395.44h1.2v1.2h-1.2zM796.1 404.7h1.2v1.2h-1.2zM796.1 413.96h1.2v1.2h-1.2zM796.1 423.22h1.2v1.2h-1.2zM796.1 432.48h1.2v1.2h-1.2zM796.1 441.74h1.2v1.2h-1.2zM796.1 451h1.2v1.2h-1.2zM796.1 460.26h1.2v1.2h-1.2zM796.1 469.52h1.2v1.2h-1.2zM796.1 478.78h1.2v1.2h-1.2zM796.1 488.04h1.2v1.2h-1.2zM796.1 497.3h1.2v1.2h-1.2zM813.76 80.6h1.2v1.2h-1.2zM813.76 126.9h1.2v1.2h-1.2zM813.76 173.2h1.2v1.2h-1.2zM813.76 219.5h1.2v1.2h-1.2zM813.76 265.8h1.2v1.2h-1.2zM813.76 312.1h1.2v1.2h-1.2zM813.76 358.4h1.2v1.2h-1.2zM813.76 404.7h1.2v1.2h-1.2zM813.76 451h1.2v1.2h-1.2zM813.76 497.3h1.2v1.2h-1.2zM831.42 80.6h1.2v1.2h-1.2zM831.42 126.9h1.2v1.2h-1.2zM831.42 173.2h1.2v1.2h-1.2zM831.42 219.5h1.2v1.2h-1.2zM831.42 265.8h1.2v1.2h-1.2zM831.42 312.1h1.2v1.2h-1.2zM831.42 358.4h1.2v1.2h-1.2zM831.42 404.7h1.2v1.2h-1.2zM831.42 451h1.2v1.2h-1.2zM831.42 497.3h1.2v1.2h-1.2zM849.08 80.6h1.2v1.2h-1.2zM849.08 126.9h1.2v1.2h-1.2zM849.08 173.2h1.2v1.2h-1.2zM849.08 219.5h1.2v1.2h-1.2zM849.08 265.8h1.2v1.2h-1.2zM849.08 312.1h1.2v1.2h-1.2zM849.08 358.4h1.2v1.2h-1.2zM849.08 404.7h1.2v1.2h-1.2zM849.08 451h1.2v1.2h-1.2zM849.08 497.3h1.2v1.2h-1.2zM866.74 80.6h1.2v1.2h-1.2zM866.74 126.9h1.2v1.2h-1.2zM866.74 173.2h1.2v1.2h-1.2zM866.74 219.5h1.2v1.2h-1.2zM866.74 265.8h1.2v1.2h-1.2zM866.74 312.1h1.2v1.2h-1.2zM866.74 358.4h1.2v1.2h-1.2zM866.74 404.7h1.2v1.2h-1.2zM866.74 451h1.2v1.2h-1.2zM866.74 497.3h1.2v1.2h-1.2z" fill="#474747"/>
<line x1="444" y1="61.47" x2="444" y2="502" stroke="#505050" stroke-width="2.2" stroke-dasharray="3.2 2.0176"/>
<line x1="30.88" y1="266.6" x2="867.2" y2="266.6" stroke="#a0a0a0" stroke-width="1.3" stroke-dasharray="3.2 2.0064"/>
<polyline points="2,228.46 3,231.84 4,235.28 5,238.78 6,242.32 7,245.92 8,249.55 9,253.21 10,256.89 11,260.59 12,264.31 13,268.02 14,271.74 15,275.44 16,279.13 17,282.79 18,286.42 19,290.02 20,293.57 21,297.08 22,300.52 23,303.91 24,307.23 25,310.47 26,313.63 27,316.7 28,319.69 29,322.57 30,325.35 31,328.03 32,330.59 33,333.04 34,335.36 35,337.56 36,339.62 37,341.56 38,343.35 39,345.01 40,346.52 41,347.89 42,349.1 43,350.17 44,351.08 45,351.84 46,352.44 47,352.88 48,353.17 49,353.29 50,353.26 51,353.07 52,352.72 53,352.21 54,351.55 55,350.73 56,349.76 57,348.63 58,347.36 59,345.93 60,344.36 61,342.65 62,340.8 63,338.81 64,336.69 65,334.45 66,332.07 67,329.58 68,326.97 69,324.25 70,321.43 71,318.5 72,315.48 73,312.37 74,309.18 75,305.91 76,302.56 77,299.15 78,295.68 79,292.16 80,288.58 81,284.97 82,281.33 83,277.65 84,273.96 85,270.25 86,266.54 87,262.82 88,259.11 89,255.42 90,251.74 91,248.09 92,244.47 93,240.9 94,237.37 95,233.89 96,230.48 97,227.12 98,223.84 99,220.64 100,217.52 101,214.49 102,211.56 103,208.72 104,205.99 105,203.37 106,200.87 107,198.49 108,196.23 109,194.09 110,192.09 111,190.23 112,188.5 113,186.92 114,185.48 115,184.19 116,183.05 117,182.06 118,181.22 119,180.54 120,180.02 121,179.66 122,179.45 123,179.4 124,179.51 125,179.78 126,180.21 127,180.8 128,181.54 129,182.44 130,183.49 131,184.69 132,186.04 133,187.53 134,189.17 135,190.96 136,192.88 137,194.93 138,197.11 139,199.42 140,201.86 141,204.41 142,207.07 143,209.85 144,212.72 145,215.69 146,218.76 147,221.91 148,225.15 149,228.46 150,231.84 151,235.28 152,238.78 153,242.32 154,245.92 155,249.55 156,253.21 157,256.89 158,260.59 159,264.31 160,268.02 161,271.74 162,275.44 163,279.13 164,282.79 165,286.42 166,290.02 167,293.57 168,297.08 169,300.52 170,303.91 171,307.23 172,310.47 173,313.63 174,316.7 175,319.69 176,322.57 177,325.35 178,328.03 179,330.59 180,333.04 181,335.36 182,337.56 183,339.62 184,341.56 185,343.35 186,345.01 187,346.52 188,347.89 189,349.1 190,350.17 191,351.08 192,351.84 193,352.44 194,352.88 195,353.17 196,353.29 197,353.26 198,353.07 199,352.72 200,352.21 201,351.55 202,350.73 203,349.76 204,348.63 205,347.36 206,345.93 207,344.36 208,342.65 209,340.8 210,338.81 211,336.69 212,334.45 213,332.07 214,329.58 215,326.97 216,324.25 217,321.43 218,318.5 219,315.48 220,312.37 221,309.18 222,305.91 223,302.56 224,299.15 225,295.68 226,292.16 227,288.58 228,284.97 229,281.33 230,277.65 231,273.96 232,270.25 233,266.54 234,262.82 235,259.11 236,255.42 237,251.74 238,248.09 239,244.47 240,240.9 241,237.37 242,233.89 243,230.48 244,227.12 245,223.84 246,220.64 247,217.52 248,214.49 249,211.56 250,208.72 251,205.99 252,203.37 253,200.87 254,198.49 255,196.23 256,194.09 257,192.09 258,190.23 259,188.5 260,186.92 261,185.48 262,184.19 263,183.05 264,182.06 265,181.22 266,180.54 267,180.02 268,179.66 269,179.45 270,179.4 271,179.51 272,179.78 273,180.21 274,180.8 275,181.54 276,182.44 277,183.49 278,184.69 279,186.04 280,187.53 281,189.17 282,190.96 283,192.88 284,194.93 285,197.11 286,199.42 287,201.86 288,204.41 289,207.07 290,209.85 291,212.72 292,215.69 293,218.76 294,221.91 295,225.15 296,228.46 297,231.84 298,235.28 299,238.78 300,242.32 301,245.92 302,249.55 303,253.21 304,256.89 305,260.59 306,264.31 307,268.02 308,271.74 309,275.44 310,279.13 311,282.79 312,286.42 313,290.02 314,293.57 315,297.08 316,300.52 317,303.91 318,307.23 319,310.47 320,313.63 321,316.7 322,319.69 323,322.57 324,325.35 325,328.03 326,330.59 327,333.04 328,335.36 329,337.56 330,339.62 331,341.56 332,343.35 333,345.01 334,346.52 335,347.89 336,349.1 337,350.17 338,351.08 339,351.84 340,352.44 341,352.88 342,353.17 343,353.29 344,353.26 345,353.07 346,352.72 347,352.21 348,351.55 349,350.73 350,349.76 351,348.63 352,347.36 353,345.93 354,344.36 355,342.65 356,340.8 357,338.81 358,336.69 359,334.45 360,332.07 361,329.58 362,326.97 363,324.25 364,321.43 365,318.5 366,315.48 367,312.37 368,309.18 369,305.91 370,302.56 371,299.15 372,295.68 373,292.16 374,288.58 375,284.97 376,281.33 377,277.65 378,273.96 379,270.25 380,266.54 381,262.82 382,259.11 383,255.42 384,251.74 385,248.09 386,244.47 387,240.9 388,237.37 389,233.89 390,230.48 391,227.12 392,223.84 393,220.64 394,217.52 395,214.49 396,211.56 397,208.72 398,205.99 399,203.37 400,200.87 401,198.49 402,196.23 403,194.09 404,192.09 405,190.23 406,188.5 407,186.92 408,185.48 409,184.19 410,183.05 411,182.06 412,181.22 413,180.54 414,180.02 415,179.66 416,179.45 417,179.4 418,179.51 419,179.78 420,180.21 421,180.8 422,181.54 423,182.44 424,183.49 425,184.69 426,186.04 427,187.53 428,189.17 429,190.96 430,192.88 431,194.93 432,197.11 433,199.42 434,201.86 435,204.41 436,207.07 437,209.85 438,212.72 439,215.69 440,218.76 441,221.91 442,225.15 443,228.46 444,231.84 445,235.28 446,238.78 447,242.32 448,245.92 449,249.55 450,253.21 451,256.89 452,260.59 453,264.31 454,268.02 455,271.74 456,275.44 457,279.13 458,282.79 459,286.42 460,290.02 461,293.57 462,297.08 463,300.52 464,303.91 465,307.23 466,310.47 467,313.63 468,316.7 469,319.69 470,322.57 471,325.35 472,328.03 473,330.59 474,333.04 475,335.36 476,337.56 477,339.62 478,341.56 479,343.35 480,345.01 481,346.52 482,347.89 483,349.1 484,350.17 485,351.08 486,351.84 487,352.44 488,352.88 489,353.17 490,353.29 491,353.26 492,353.07 493,352.72 494,352.21 495,351.55 496,350.73 497,349.76 498,348.63 499,347.36 500,345.93 501,344.36 502,342.65 503,340.8 504,338.81 505,336.69 506,334.45 507,332.07 508,329.58 509,326.97 510,324.25 511,321.43 512,318.5 513,315.48 514,312.37 515,309.18 516,305.91 517,302.56 518,299.15 519,295.68 520,292.16 521,288.58 522,284.97 523,281.33 524,277.65 525,273.96 526,270.25 527,266.54 528,262.82 529,259.11 530,255.42 531,251.74 532,248.09 533,244.47 534,240.9 535,237.37 536,233.89 537,230.48 538,227.12 539,223.84 540,220.64 541,217.52 542,214.49 543,211.56 544,208.72 545,205.99 546,203.37 547,200.87 548,198.49 549,196.23 550,194.09 551,192.09 552,190.23 553,188.5 554,186.92 555,185.48 556,184.19 557,183.05 558,182.06 559,181.22 560,180.54 561,180.02 562,179.66 563,179.45 564,179.4 565,179.51 566,179.78 567,180.21 568,180.8 569,181.54 570,182.44 571,183.49 572,184.69 573,186.04 574,187.53 575,189.17 576,190.96 577,192.88 578,194.93 579,197.11 580,199.42 581,201.86 582,204.41 583,207.07 584,209.85 585,212.72 586,215.69 587,218.76 588,221.91 589,225.15 590,228.46 591,231.84 592,235.28 593,238.78 594,242.32 595,245.92 596,249.55 597,253.21 598,256.89 599,260.59 600,264.31 601,268.02 602,271.74 603,275.44 604,279.13 605,282.79 606,286.42 607,290.02 608,293.57 609,297.08 610,300.52 611,303.91 612,307.23 613,310.47 614,313.63 615,316.7 616,319.69 617,322.57 618,325.35 619,328.03 620,330.59 621,333.04 622,335.36 623,337.56 624,339.62 625,341.56 626,343.35 627,345.01 628,346.52 629,347.89 630,349.1 631,350.17 632,351.08 633,351.84 634,352.44 635,352.88 636,353.17 637,353.29 638,353.26 639,353.07 640,352.72 641,352.21 642,351.55 643,350.73 644,349.76 645,348.63 646,347.36 647,345.93 648,344.36 649,342.65 650,340.8 651,338.81 652,336.69 653,334.45 654,332.07 655,329.58 656,326.97 657,324.25 658,321.43 659,318.5 660,315.48 661,312.37 662,309.18 663,305.91 664,302.56 665,299.15 666,295.68 667,292.16 668,288.58 669,284.97 670,281.33 671,277.65 672,273.96 673,270.25 674,266.54 675,262.82 676,259.11 677,255.42 678,251.74 679,248.09 680,244.47 681,240.9 682,237.37 683,233.89 684,230.48 685,227.12 686,223.84 687,220.64 688,217.52 689,214.49 690,211.56 691,208.72 692,205.99 693,203.37 694,200.87 695,198.49 696,196.23 697,194.09 698,192.09 699,190.23 700,188.5 701,186.92 702,185.48 703,184.19 704,183.05 705,182.06 706,181.22 707,180.54 708,180.02 709,179.66 710,179.45 711,179.4 712,179.51 713,179.78 714,180.21 715,180.8 716,181.54 717,182.44 718,183.49 719,184.69 720,186.04 721,187.53 722,189.17 723,190.96 724,192.88 725,194.93 726,197.11 727,199.42 728,201.86 729,204.41 730,207.07 731,209.85 732,212.72 733,215.69 734,218.76 735,221.91 736,225.15 737,228.46 738,231.84 739,235.28 740,238.78 741,242.32 742,245.92 743,249.55 744,253.21 745,256.89 746,260.59 747,264.31 748,268.02 749,271.74 750,275.44 751,279.13 752,282.79 753,286.42 754,290.02 755,293.57 756,297.08 757,300.52 758,303.91 759,307.23 760,310.47 761,313.63 762,316.7 763,319.69 764,322.57 765,325.35 766,328.03 767,330.59 768,333.04 769,335.36 770,337.56 771,339.62 772,341.56 773,343.35 774,345.01 775,346.52 776,347.89 777,349.1 778,350.17 779,351.08 780,351.84 781,352.44 782,352.88 783,353.17 784,353.29 785,353.26 786,353.07 787,352.72 788,352.21 789,351.55 790,350.73 791,349.76 792,348.63 793,347.36 794,345.93 795,344.36 796,342.65 797,340.8 798,338.81 799,336.69 800,334.45 801,332.07 802,329.58 803,326.97 804,324.25 805,321.43 806,318.5 807,315.48 808,312.37 809,309.18 810,305.91 811,302.56 812,299.15 813,295.68 814,292.16 815,288.58 816,284.97 817,281.33 818,277.65 819,273.96 820,270.25 821,266.54 822,262.82 823,259.11 824,255.42 825,251.74 826,248.09 827,244.47 828,240.9 829,237.37 830,233.89 831,230.48 832,227.12 833,223.84 834,220.64 835,217.52 836,214.49 837,211.56 838,208.72 839,205.99 840,203.37 841,200.87 842,198.49 843,196.23 844,194.09 845,192.09 846,190.23 847,188.5 848,186.92 849,185.48 850,184.19 851,183.05 852,182.06 853,181.22 854,180.54 855,180.02 856,179.66 857,179.45 858,179.4 859,179.51 860,179.78 861,180.21 862,180.8 863,181.54 864,182.44 865,183.49 866,184.69 867,186.04 868,187.53 869,189.17 870,190.96 871,192.88 872,194.93 873,197.11 874,199.42 875,201.86 876,204.41 877,207.07 878,209.85 879,212.72 880,215.69 881,218.76 882,221.91 883,225.15 884,228.46 885,231.84" fill="none" stroke="#7c2e38" stroke-width="1.25"/>
<polyline points="2,266.17 3,262.54 4,258.92 5,255.3 6,251.7 7,248.13 8,244.58 9,241.07 10,237.6 11,234.17 12,230.8 13,227.5 14,224.25 15,221.08 16,217.99 17,214.98 18,212.07 19,209.24 20,206.52 21,203.9 22,201.39 23,198.99 24,196.71 25,194.56 26,192.53 27,190.63 28,188.87 29,187.24 30,185.75 31,184.41 32,183.21 33,182.15 34,181.25 35,180.49 36,179.89 37,179.45 38,179.15 39,179.01 40,179.03 41,179.2 42,179.52 43,180 44,180.63 45,181.42 46,182.35 47,183.43 48,184.66 49,186.04 50,187.55 51,189.21 52,191 53,192.93 54,194.98 55,197.16 56,199.46 57,201.88 58,204.41 59,207.05 60,209.8 61,212.64 62,215.58 63,218.6 64,221.71 65,224.9 66,228.15 67,231.47 68,234.85 69,238.29 70,241.77 71,245.29 72,248.84 73,252.42 74,256.02 75,259.64 76,263.27 77,266.89 78,270.51 79,274.12 80,277.71 81,281.27 82,284.81 83,288.3 84,291.75 85,295.15 86,298.49 87,301.77 88,304.98 89,308.12 90,311.17 91,314.14 92,317.02 93,319.8 94,322.47 95,325.04 96,327.5 97,329.85 98,332.07 99,334.17 100,336.14 101,337.98 102,339.68 103,341.25 104,342.67 105,343.95 106,345.09 107,346.07 108,346.91 109,347.59 110,348.13 111,348.51 112,348.73 113,348.8 114,348.71 115,348.47 116,348.08 117,347.53 118,346.83 119,345.98 120,344.98 121,343.83 122,342.54 123,341.1 124,339.52 125,337.8 126,335.95 127,333.96 128,331.85 129,329.62 130,327.26 131,324.79 132,322.21 133,319.52 134,316.73 135,313.85 136,310.87 137,307.81 138,304.66 139,301.45 140,298.16 141,294.81 142,291.41 143,287.95 144,284.45 145,280.92 146,277.35 147,273.76 148,270.15 149,266.53 150,262.9 151,259.28 152,255.66 153,252.06 154,248.48 155,244.93 156,241.42 157,237.94 158,234.51 159,231.14 160,227.82 161,224.57 162,221.4 163,218.3 164,215.28 165,212.35 166,209.52 167,206.79 168,204.16 169,201.63 170,199.23 171,196.94 172,194.77 173,192.73 174,190.82 175,189.04 176,187.4 177,185.89 178,184.53 179,183.32 180,182.25 181,181.33 182,180.56 183,179.95 184,179.48 185,179.17 186,179.02 187,179.02 188,179.17 189,179.48 190,179.95 191,180.56 192,181.33 193,182.25 194,183.32 195,184.53 196,185.89 197,187.4 198,189.04 199,190.82 200,192.73 201,194.77 202,196.94 203,199.23 204,201.63 205,204.16 206,206.79 207,209.52 208,212.35 209,215.28 210,218.3 211,221.4 212,224.57 213,227.82 214,231.14 215,234.51 216,237.94 217,241.42 218,244.93 219,248.48 220,252.06 221,255.66 222,259.28 223,262.9 224,266.53 225,270.15 226,273.76 227,277.35 228,280.92 229,284.45 230,287.95 231,291.41 232,294.81 233,298.16 234,301.45 235,304.66 236,307.81 237,310.87 238,313.85 239,316.73 240,319.52 241,322.21 242,324.79 243,327.26 244,329.62 245,331.85 246,333.96 247,335.95 248,337.8 249,339.52 250,341.1 251,342.54 252,343.83 253,344.98 254,345.98 255,346.83 256,347.53 257,348.08 258,348.47 259,348.71 260,348.8 261,348.73 262,348.51 263,348.13 264,347.59 265,346.91 266,346.07 267,345.09 268,343.95 269,342.67 270,341.25 271,339.68 272,337.98 273,336.14 274,334.17 275,332.07 276,329.85 277,327.5 278,325.04 279,322.47 280,319.8 281,317.02 282,314.14 283,311.17 284,308.12 285,304.98 286,301.77 287,298.49 288,295.15 289,291.75 290,288.3 291,284.81 292,281.27 293,277.71 294,274.12 295,270.51 296,266.89 297,263.27 298,259.64 299,256.02 300,252.42 301,248.84 302,245.29 303,241.77 304,238.29 305,234.85 306,231.47 307,228.15 308,224.9 309,221.71 310,218.6 311,215.58 312,212.64 313,209.8 314,207.05 315,204.41 316,201.88 317,199.46 318,197.16 319,194.98 320,192.93 321,191 322,189.21 323,187.55 324,186.04 325,184.66 326,183.43 327,182.35 328,181.42 329,180.63 330,180 331,179.52 332,179.2 333,179.03 334,179.01 335,179.15 336,179.45 337,179.89 338,180.49 339,181.25 340,182.15 341,183.21 342,184.41 343,185.75 344,187.24 345,188.87 346,190.63 347,192.53 348,194.56 349,196.71 350,198.99 351,201.39 352,203.9 353,206.52 354,209.24 355,212.07 356,214.98 357,217.99 358,221.08 359,224.25 360,227.5 361,230.8 362,234.17 363,237.6 364,241.07 365,244.58 366,248.13 367,251.7 368,255.3 369,258.92 370,262.54 371,266.17 372,269.79 373,273.4 374,276.99 375,280.56 376,284.1 377,287.61 378,291.06 379,294.47 380,297.83 381,301.12 382,304.35 383,307.5 384,310.57 385,313.55 386,316.45 387,319.25 388,321.95 389,324.54 390,327.02 391,329.39 392,331.64 393,333.76 394,335.76 395,337.62 396,339.35 397,340.95 398,342.4 399,343.71 400,344.87 401,345.89 402,346.75 403,347.47 404,348.03 405,348.44 406,348.7 407,348.8 408,348.74 409,348.54 410,348.17 411,347.65 412,346.98 413,346.16 414,345.19 415,344.07 416,342.81 417,341.4 418,339.84 419,338.15 420,336.33 421,334.37 422,332.29 423,330.08 424,327.74 425,325.3 426,322.74 427,320.07 428,317.3 429,314.43 430,311.47 431,308.43 432,305.3 433,302.1 434,298.82 435,295.49 436,292.09 437,288.65 438,285.16 439,281.63 440,278.07 441,274.48 442,270.87 443,267.25 444,263.63 445,260 446,256.39 447,252.78 448,249.2 449,245.64 450,242.12 451,238.63 452,235.19 453,231.81 454,228.48 455,225.22 456,222.03 457,218.91 458,215.88 459,212.93 460,210.08 461,207.32 462,204.67 463,202.13 464,199.7 465,197.39 466,195.19 467,193.13 468,191.19 469,189.38 470,187.71 471,186.18 472,184.79 473,183.55 474,182.45 475,181.5 476,180.71 477,180.06 478,179.56 479,179.22 480,179.04 481,179.01 482,179.13 483,179.41 484,179.84 485,180.43 486,181.17 487,182.06 488,183.09 489,184.28 490,185.61 491,187.08 492,188.7 493,190.45 494,192.34 495,194.35 496,196.49 497,198.76 498,201.14 499,203.64 500,206.25 501,208.97 502,211.78 503,214.69 504,217.69 505,220.77 506,223.93 507,227.17 508,230.47 509,233.83 510,237.25 511,240.72 512,244.23 513,247.77 514,251.34 515,254.94 516,258.55 517,262.18 518,265.8 519,269.43 520,273.04 521,276.63 522,280.21 523,283.75 524,287.26 525,290.72 526,294.14 527,297.5 528,300.8 529,304.03 530,307.18 531,310.26 532,313.26 533,316.16 534,318.97 535,321.68 536,324.28 537,326.78 538,329.16 539,331.42 540,333.55 541,335.56 542,337.44 543,339.19 544,340.79 545,342.26 546,343.58 547,344.76 548,345.79 549,346.67 550,347.4 551,347.98 552,348.41 553,348.68 554,348.8 555,348.76 556,348.56 557,348.21 558,347.71 559,347.06 560,346.25 561,345.3 562,344.19 563,342.94 564,341.54 565,340.01 566,338.33 567,336.52 568,334.57 569,332.5 570,330.3 571,327.98 572,325.55 573,323 574,320.34 575,317.58 576,314.72 577,311.77 578,308.73 579,305.62 580,302.42 581,299.15 582,295.82 583,292.44 584,288.99 585,285.51 586,281.98 587,278.42 588,274.84 589,271.23 590,267.62 591,263.99 592,260.37 593,256.75 594,253.14 595,249.55 596,245.99 597,242.47 598,238.98 599,235.54 600,232.14 601,228.81 602,225.54 603,222.34 604,219.22 605,216.18 606,213.22 607,210.36 608,207.6 609,204.93 610,202.38 611,199.94 612,197.61 613,195.41 614,193.33 615,191.38 616,189.56 617,187.87 618,186.33 619,184.93 620,183.67 621,182.56 622,181.59 623,180.78 624,180.12 625,179.61 626,179.25 627,179.05 628,179 629,179.11 630,179.37 631,179.79 632,180.36 633,181.09 634,181.96 635,182.98 636,184.15 637,185.47 638,186.93 639,188.53 640,190.27 641,192.14 642,194.14 643,196.27 644,198.53 645,200.9 646,203.39 647,205.99 648,208.69 649,211.49 650,214.39 651,217.38 652,220.46 653,223.61 654,226.84 655,230.14 656,233.49 657,236.91 658,240.37 659,243.87 660,247.41 661,250.99 662,254.58 663,258.19 664,261.82 665,265.44 666,269.06 667,272.68 668,276.28 669,279.85 670,283.4 671,286.91 672,290.38 673,293.8 674,297.16 675,300.47 676,303.71 677,306.87 678,309.96 679,312.96 680,315.88 681,318.7 682,321.42 683,324.03 684,326.53 685,328.92 686,331.2 687,333.34 688,335.37 689,337.26 690,339.02 691,340.64 692,342.12 693,343.46 694,344.65 695,345.7 696,346.59 697,347.34 698,347.93 699,348.37 700,348.66 701,348.79 702,348.77 703,348.59 704,348.26 705,347.77 706,347.13 707,346.34 708,345.4 709,344.31 710,343.07 711,341.69 712,340.17 713,338.5 714,336.71 715,334.77 716,332.71 717,330.53 718,328.22 719,325.79 720,323.26 721,320.61 722,317.86 723,315.01 724,312.07 725,309.04 726,305.93 727,302.74 728,299.48 729,296.16 730,292.78 731,289.34 732,285.86 733,282.34 734,278.78 735,275.2 736,271.6 737,267.98 738,264.35 739,260.73 740,257.11 741,253.5 742,249.91 743,246.35 744,242.82 745,239.33 746,235.88 747,232.48 748,229.14 749,225.87 750,222.66 751,219.53 752,216.48 753,213.51 754,210.64 755,207.87 756,205.2 757,202.63 758,200.18 759,197.84 760,195.62 761,193.53 762,191.57 763,189.73 764,188.04 765,186.48 766,185.06 767,183.79 768,182.66 769,181.68 770,180.85 771,180.18 772,179.65 773,179.28 774,179.06 775,179 776,179.09 777,179.34 778,179.74 779,180.3 780,181.01 781,181.87 782,182.87 783,184.03 784,185.33 785,186.78 786,188.36 787,190.09 788,191.95 789,193.94 790,196.06 791,198.3 792,200.66 793,203.13 794,205.72 795,208.41 796,211.21 797,214.1 798,217.08 799,220.15 800,223.29 801,226.52 802,229.8 803,233.16 804,236.56 805,240.02 806,243.52 807,247.06 808,250.63 809,254.22 810,257.83 811,261.45 812,265.08 813,268.7 814,272.32 815,275.92 816,279.5 817,283.04 818,286.56 819,290.03 820,293.46 821,296.83 822,300.14 823,303.39 824,306.56 825,309.65 826,312.67 827,315.59 828,318.42 829,321.15 830,323.77 831,326.29 832,328.69 833,330.97 834,333.14 835,335.17 836,337.08 837,338.85 838,340.48 839,341.98 840,343.33 841,344.54 842,345.6 843,346.51 844,347.27 845,347.88 846,348.34 847,348.64 848,348.78 849,348.78 850,348.61 851,348.3 852,347.83 853,347.2 854,346.43 855,345.5 856,344.42 857,343.2 858,341.83 859,340.32 860,338.68 861,336.89 862,334.97 863,332.92 864,330.75 865,328.46 866,326.04 867,323.52 868,320.88 869,318.14 870,315.3 871,312.37 872,309.35 873,306.25 874,303.06 875,299.81 876,296.49 877,293.12 878,289.69 879,286.21 880,282.69 881,279.14 882,275.56 883,271.96 884,268.34 885,264.72" fill="none" stroke="#b0b290" stroke-width="1.05"/>
<rect x="849.3" y="76.7" width="33.7" height="9" fill="#000"/>
<text x="882" y="84.7" font-size="9.2" fill="#cf4d66" text-anchor="end">200 mV</text>
<rect x="849.3" y="123" width="33.7" height="9" fill="#000"/>
<text x="882" y="131" font-size="9.2" fill="#cf4d66" text-anchor="end">150 mV</text>
<rect x="849.3" y="169.3" width="33.7" height="9" fill="#000"/>
<text x="882" y="177.3" font-size="9.2" fill="#cf4d66" text-anchor="end">100 mV</text>
<rect x="854.41" y="215.6" width="28.59" height="9" fill="#000"/>
<text x="882" y="223.6" font-size="9.2" fill="#cf4d66" text-anchor="end">50 mV</text>
<rect x="868.18" y="261.9" width="7.12" height="9" fill="#000"/>
<text x="874.3" y="269.9" font-size="9.2" fill="#cf4d66" text-anchor="end">0</text>
<rect x="851.35" y="308.2" width="31.65" height="9" fill="#000"/>
<text x="882" y="316.2" font-size="9.2" fill="#cf4d66" text-anchor="end">-50 mV</text>
<rect x="846.23" y="354.5" width="36.77" height="9" fill="#000"/>
<text x="882" y="362.5" font-size="9.2" fill="#cf4d66" text-anchor="end">-100 mV</text>
<rect x="846.23" y="400.8" width="36.77" height="9" fill="#000"/>
<text x="882" y="408.8" font-size="9.2" fill="#cf4d66" text-anchor="end">-150 mV</text>
<rect x="846.23" y="447.1" width="36.77" height="9" fill="#000"/>
<text x="882" y="455.1" font-size="9.2" fill="#cf4d66" text-anchor="end">-200 mV</text>
<text x="90.3" y="499" font-size="9" fill="#dadada" text-anchor="middle">-1.6 ns</text>
<text x="178.6" y="499" font-size="9" fill="#dadada" text-anchor="middle">-1.2 ns</text>
<text x="266.9" y="499" font-size="9" fill="#dadada" text-anchor="middle">-800 ps</text>
<text x="355.2" y="499" font-size="9" fill="#dadada" text-anchor="middle">-400 ps</text>
<text x="443.5" y="499" font-size="9" fill="#dadada" text-anchor="middle">0 s</text>
<text x="531.8" y="499" font-size="9" fill="#dadada" text-anchor="middle">400 ps</text>
<text x="620.1" y="499" font-size="9" fill="#dadada" text-anchor="middle">800 ps</text>
<text x="708.4" y="499" font-size="9" fill="#dadada" text-anchor="middle">1.2 ns</text>
<text x="796.7" y="499" font-size="9" fill="#dadada" text-anchor="middle">1.6 ns</text>
</g>
<path d="M858 44H882V67Z" fill="#5a5a5a"/>
<circle cx="876.3" cy="48.2" r="3" fill="none" stroke="#cfcfcf" stroke-width="1.2"/><line x1="874.2" y1="50.4" x2="869.2" y2="55.4" stroke="#cfcfcf" stroke-width="1.4"/>
<path d="M3.6 258V256.2Q3.6 254.2 5.6 254.2H20.5L28.8 263.2L26 266" fill="none" stroke="#b9a646" stroke-width="1.2" stroke-linejoin="round"/>
<path d="M5 257H20.5L28.8 266L20.5 275H5Q3 275 3 273V259Q3 257 5 257Z" fill="#e8486a"/>
<text x="15.5" y="269.5" font-size="8.5" fill="#ffe4ea" text-anchor="middle">C 3</text>
<path d="M874.2 263.2L880.6 258V262.2H886V264.2H880.6V269.2Z" fill="#f2ee2a"/>
<path d="M438.5 39.6H449L443.7 44.3Z" fill="#f0922e"/>
<path d="M439 45H448.5V56H445.2L443.7 58.5L442.2 56H439Z" fill="#000" stroke="#f0922e" stroke-width="1.2"/>
<path d="M440.6 47.6H446.8V49H444.4V54H443V49H440.6Z" fill="#f2f2f2"/>
<circle cx="891.6" cy="257.8" r="1.2" fill="#c8c8c8"/>
<circle cx="891.6" cy="262" r="1.2" fill="#c8c8c8"/>
<circle cx="891.6" cy="266.3" r="1.2" fill="#c8c8c8"/>
<rect x="895.5" y="21" width="110" height="482" fill="#2b2b2b" stroke="#474747" stroke-width="1"/>
<text x="948" y="33.6" font-size="11" fill="#eeeeee" text-anchor="middle" stroke="#eeeeee" stroke-width="0.3">添加新...</text>
<rect x="900.5" y="40.5" width="44.5" height="26" rx="4" fill="url(#gbtn)" stroke="#4a4a4a" stroke-width="1"/>
<text x="922.75" y="56.8" font-size="11" fill="#e8e8e8" text-anchor="middle" stroke="#e8e8e8" stroke-width="0.22">光标</text>
<rect x="950.8" y="40.5" width="44" height="26" rx="4" fill="url(#gbtn)" stroke="#4a4a4a" stroke-width="1"/>
<text x="972.8" y="56.8" font-size="10.8" fill="#e8e8e8" text-anchor="middle" stroke="#e8e8e8" stroke-width="0.15" textLength="35.3" lengthAdjust="spacingAndGlyphs">Callout</text>
<rect x="900.5" y="72.7" width="44.5" height="26" rx="4" fill="url(#gbtn)" stroke="#4a4a4a" stroke-width="1"/>
<text x="922.75" y="89" font-size="11" fill="#e8e8e8" text-anchor="middle" stroke="#e8e8e8" stroke-width="0.22">测量</text>
<rect x="950.8" y="72.7" width="44" height="26" rx="4" fill="url(#gbtn)" stroke="#4a4a4a" stroke-width="1"/>
<text x="972.8" y="89" font-size="11" fill="#e8e8e8" text-anchor="middle" stroke="#e8e8e8" stroke-width="0.22">搜索</text>
<rect x="900.5" y="105.5" width="44.5" height="26" rx="4" fill="url(#gbtn)" stroke="#4a4a4a" stroke-width="1"/>
<text x="922.75" y="121.8" font-size="11" fill="#e8e8e8" text-anchor="middle" stroke="#e8e8e8" stroke-width="0.22">结果表</text>
<rect x="950.8" y="105.5" width="44" height="26" rx="4" fill="url(#gbtn)" stroke="#4a4a4a" stroke-width="1"/>
<text x="972.8" y="121.8" font-size="11" fill="#e8e8e8" text-anchor="middle" stroke="#e8e8e8" stroke-width="0.22">绘图</text>
<rect x="897" y="135.3" width="103" height="1" fill="#474747"/>
<rect x="900.5" y="140.2" width="44.5" height="26" rx="4" fill="url(#gbtn)" stroke="#4a4a4a" stroke-width="1"/>
<rect x="950.8" y="140.2" width="44" height="26" rx="4" fill="url(#gbtn)" stroke="#4a4a4a" stroke-width="1"/>
<text x="972.8" y="156.5" font-size="11" fill="#e8e8e8" text-anchor="middle" stroke="#e8e8e8" stroke-width="0.22">更多...</text>
<rect x="897" y="171.3" width="103" height="1" fill="#474747"/>
<path d="M916.5 146.5H928.5V157M916.5 146.5V158.5H925" fill="none" stroke="#d8d8d8" stroke-width="1" stroke-dasharray="1.2 1"/>
<circle cx="923" cy="152" r="2.8" fill="none" stroke="#e0e0e0" stroke-width="1"/><path d="M921 154L918.5 156.5" stroke="#e0e0e0" stroke-width="1.2"/><path d="M925.5 154.5L929.5 158.5L927.2 158.8Z" fill="#e0e0e0"/>
<clipPath id="cm0"><rect x="897.7" y="178.3" width="100.2" height="37.6" rx="4"/></clipPath>
<g clip-path="url(#cm0)">
<rect x="897.7" y="178.3" width="100.2" height="38" fill="#cacaca"/>
<rect x="897.7" y="178.3" width="100.2" height="12.8" fill="#575757"/>
</g>
<text x="901.8" y="188" font-size="10.4" fill="#ececec" stroke="#ececec" stroke-width="0.25" textLength="34" lengthAdjust="spacingAndGlyphs">Meas 3</text>
<text x="901.8" y="200.7" font-size="10" fill="#1e1e1e" stroke="#1e1e1e" stroke-width="0.22" textLength="45.3" lengthAdjust="spacingAndGlyphs">Frequency</text>
<text x="901.8" y="213.9" font-size="10" fill="#1e1e1e" stroke="#1e1e1e" stroke-width="0.22" textLength="63" lengthAdjust="spacingAndGlyphs">µ': 1.499 GHz</text>
<rect x="978.6" y="181" width="15.4" height="8.3" rx="4.1" fill="#f2e82a"/>
<text x="986.3" y="187.8" font-size="7.5" fill="#222" text-anchor="middle">1</text>
<clipPath id="cm1"><rect x="897.7" y="221.6" width="100.2" height="37.6" rx="4"/></clipPath>
<g clip-path="url(#cm1)">
<rect x="897.7" y="221.6" width="100.2" height="38" fill="#cacaca"/>
<rect x="897.7" y="221.6" width="100.2" height="12.8" fill="#575757"/>
</g>
<text x="901.8" y="231.3" font-size="10.4" fill="#ececec" stroke="#ececec" stroke-width="0.25" textLength="34" lengthAdjust="spacingAndGlyphs">Meas 4</text>
<text x="901.8" y="244" font-size="10" fill="#1e1e1e" stroke="#1e1e1e" stroke-width="0.22" textLength="57.6" lengthAdjust="spacingAndGlyphs">Peak-to-Peak</text>
<text x="901.8" y="257.2" font-size="10" fill="#1e1e1e" stroke="#1e1e1e" stroke-width="0.22" textLength="58.5" lengthAdjust="spacingAndGlyphs">µ': 373.2 mV</text>
<rect x="978.6" y="224.3" width="15.4" height="8.3" rx="4.1" fill="#f2e82a"/>
<text x="986.3" y="231.1" font-size="7.5" fill="#222" text-anchor="middle">1</text>
<clipPath id="cm2"><rect x="897.7" y="264.9" width="100.2" height="37.6" rx="4"/></clipPath>
<g clip-path="url(#cm2)">
<rect x="897.7" y="264.9" width="100.2" height="38" fill="#cacaca"/>
<rect x="897.7" y="264.9" width="100.2" height="12.8" fill="#000"/>
</g>
<text x="901.8" y="274.6" font-size="10.4" fill="#e3e35a" stroke="#e3e35a" stroke-width="0.25" textLength="34" lengthAdjust="spacingAndGlyphs">Meas 6</text>
<text x="901.8" y="287.3" font-size="10" fill="#1e1e1e" stroke="#1e1e1e" stroke-width="0.22" textLength="25.3" lengthAdjust="spacingAndGlyphs">Phase</text>
<text x="901.8" y="300.5" font-size="10" fill="#1e1e1e" stroke="#1e1e1e" stroke-width="0.22" textLength="60.9" lengthAdjust="spacingAndGlyphs">µ': 202.8 Deg</text>
<clipPath id="cb"><rect x="957.8" y="266.1" width="36.2" height="8.8" rx="4.3"/></clipPath>
<g clip-path="url(#cb)">
<rect x="957.8" y="266.1" width="36.2" height="8.8" fill="#e8486a"/>
<path d="M957.8 266.1H979.5L974.5 274.9H957.8Z" fill="#f2e82a"/>
<path d="M979.5 266.1L974.5 274.9" fill="none" stroke="#333" stroke-width="0.8"/>
</g>
<text x="965.9" y="273.3" font-size="7.5" fill="#222" text-anchor="middle">1</text>
<text x="985.6" y="273.3" font-size="7.5" fill="#ffe0e6" text-anchor="middle">3</text>
<clipPath id="cm3"><rect x="897.7" y="308.2" width="100.2" height="37.6" rx="4"/></clipPath>
<g clip-path="url(#cm3)">
<rect x="897.7" y="308.2" width="100.2" height="38" fill="#cacaca"/>
<rect x="897.7" y="308.2" width="100.2" height="12.8" fill="#575757"/>
</g>
<text x="901.8" y="317.9" font-size="10.4" fill="#ececec" stroke="#ececec" stroke-width="0.25" textLength="34" lengthAdjust="spacingAndGlyphs">Meas 8</text>
<text x="901.8" y="330.6" font-size="10" fill="#1e1e1e" stroke="#1e1e1e" stroke-width="0.22" textLength="45.3" lengthAdjust="spacingAndGlyphs">Frequency</text>
<text x="901.8" y="343.8" font-size="10" fill="#1e1e1e" stroke="#1e1e1e" stroke-width="0.22" textLength="63" lengthAdjust="spacingAndGlyphs">µ': 1.501 GHz</text>
<rect x="978.6" y="310.9" width="15.4" height="8.3" rx="4.1" fill="#e8486a"/>
<text x="986.3" y="317.7" font-size="7.5" fill="#ffe0e6" text-anchor="middle">3</text>
<clipPath id="cm4"><rect x="897.7" y="351.5" width="100.2" height="37.6" rx="4"/></clipPath>
<g clip-path="url(#cm4)">
<rect x="897.7" y="351.5" width="100.2" height="38" fill="#cacaca"/>
<rect x="897.7" y="351.5" width="100.2" height="12.8" fill="#575757"/>
</g>
<text x="901.8" y="361.2" font-size="10.4" fill="#ececec" stroke="#ececec" stroke-width="0.25" textLength="34" lengthAdjust="spacingAndGlyphs">Meas 7</text>
<text x="901.8" y="373.9" font-size="10" fill="#1e1e1e" stroke="#1e1e1e" stroke-width="0.22" textLength="57.6" lengthAdjust="spacingAndGlyphs">Peak-to-Peak</text>
<text x="901.8" y="387.1" font-size="10" fill="#1e1e1e" stroke="#1e1e1e" stroke-width="0.22" textLength="58.5" lengthAdjust="spacingAndGlyphs">µ': 189.8 mV</text>
<rect x="978.6" y="354.2" width="15.4" height="8.3" rx="4.1" fill="#e8486a"/>
<text x="986.3" y="361" font-size="7.5" fill="#ffe0e6" text-anchor="middle">3</text>
<clipPath id="cc2"><rect x="2" y="510.2" width="62.7" height="50.5" rx="3.5"/></clipPath>
<g clip-path="url(#cc2)">
<rect x="2" y="510.2" width="62.7" height="50.5" fill="#cccccc"/>
<rect x="2" y="510.2" width="62.7" height="12.3" fill="#4a4a23"/>
</g>
<text x="6.2" y="520" font-size="10.4" fill="#e6e64a" stroke="#e6e64a" stroke-width="0.2" textLength="20.4" lengthAdjust="spacingAndGlyphs">Ch 1</text>
<text x="6.7" y="532.6" font-size="10" fill="#1e1e1e" stroke="#1e1e1e" stroke-width="0.22" textLength="50.5" lengthAdjust="spacingAndGlyphs">100 mV/div</text>
<text x="6.7" y="545.6" font-size="10" fill="#1e1e1e" stroke="#1e1e1e" stroke-width="0.22" textLength="22.5" lengthAdjust="spacingAndGlyphs">50 Ω</text>
<text x="6.7" y="558.6" font-size="10" fill="#1e1e1e" stroke="#1e1e1e" stroke-width="0.22" textLength="27" lengthAdjust="spacingAndGlyphs">4 GHz</text>
<clipPath id="cc68"><rect x="68.6" y="510.2" width="62.4" height="50.5" rx="3.5"/></clipPath>
<g clip-path="url(#cc68)">
<rect x="68.6" y="510.2" width="62.4" height="50.5" fill="#cccccc"/>
<rect x="68.6" y="510.2" width="62.4" height="12.3" fill="#e8486a"/>
</g>
<text x="72.8" y="520" font-size="10.4" fill="#ffe4ea" stroke="#ffe4ea" stroke-width="0.2" textLength="20.4" lengthAdjust="spacingAndGlyphs">Ch 3</text>
<text x="73.3" y="532.6" font-size="10" fill="#1e1e1e" stroke="#1e1e1e" stroke-width="0.22" textLength="45" lengthAdjust="spacingAndGlyphs">50 mV/div</text>
<text x="73.3" y="545.6" font-size="10" fill="#1e1e1e" stroke="#1e1e1e" stroke-width="0.22" textLength="22.5" lengthAdjust="spacingAndGlyphs">50 Ω</text>
<text x="73.3" y="558.6" font-size="10" fill="#1e1e1e" stroke="#1e1e1e" stroke-width="0.22" textLength="27" lengthAdjust="spacingAndGlyphs">4 GHz</text>
<rect x="334.4" y="507.2" width="27" height="53.5" rx="3.5" fill="#2c2c2c" stroke="#4a4a4a" stroke-width="1"/>
<rect x="336.5" y="511.8" width="22.7" height="2.3" rx="1" fill="#2bb8c6"/>
<text x="347.9" y="541.9" font-size="14" fill="#ececec" text-anchor="middle" stroke="#ececec" stroke-width="0.1">2</text>
<rect x="365.7" y="507.2" width="27" height="53.5" rx="3.5" fill="#2c2c2c" stroke="#4a4a4a" stroke-width="1"/>
<rect x="367.8" y="511.8" width="22.7" height="2.3" rx="1" fill="#86c83e"/>
<text x="379.2" y="541.9" font-size="14" fill="#ececec" text-anchor="middle" stroke="#ececec" stroke-width="0.1">4</text>
<rect x="408.8" y="507.2" width="27" height="53.5" rx="3.5" fill="#2c2c2c" stroke="#4a4a4a" stroke-width="1"/>
<rect x="410.9" y="511.8" width="22.7" height="2.3" rx="1" fill="#e8912e"/>
<text x="422.3" y="541.2" font-size="10.8" fill="#e2e2e2" text-anchor="middle" stroke="#e2e2e2" stroke-width="0.15">数学</text>
<rect x="440" y="507.2" width="27" height="53.5" rx="3.5" fill="#2c2c2c" stroke="#4a4a4a" stroke-width="1"/>
<rect x="442.1" y="511.8" width="22.7" height="2.3" rx="1" fill="#d0d0d0"/>
<text x="453.5" y="541.2" font-size="10.8" fill="#e2e2e2" text-anchor="middle" stroke="#e2e2e2" stroke-width="0.15">参考</text>
<rect x="471.2" y="507.2" width="27" height="53.5" rx="3.5" fill="#2c2c2c" stroke="#4a4a4a" stroke-width="1"/>
<rect x="473.3" y="511.8" width="22.7" height="2.3" rx="1" fill="#b352d6"/>
<text x="484.7" y="541.2" font-size="10.8" fill="#e2e2e2" text-anchor="middle" stroke="#e2e2e2" stroke-width="0.15">总线</text>
<rect x="513.7" y="507.2" width="27" height="53.5" rx="3.5" fill="#2c2c2c" stroke="#4a4a4a" stroke-width="1"/>
<rect x="515.8" y="511.8" width="22.7" height="2.3" rx="1" fill="#4e4e4e"/>
<text x="527.2" y="541" font-size="10.5" fill="#e6e6e6" text-anchor="middle" stroke="#e6e6e6" stroke-width="0.15">DVM</text>
<rect x="400.4" y="507" width="1" height="56" fill="#3e3e3e"/>
<rect x="506" y="507" width="1" height="56" fill="#3e3e3e"/>
<rect x="548" y="507" width="1" height="56" fill="#3e3e3e"/>
<rect x="924.5" y="507" width="1" height="56" fill="#3e3e3e"/>
<clipPath id="ci556"><rect x="556" y="510.6" width="137.5" height="49.5" rx="3.5"/></clipPath>
<g clip-path="url(#ci556)">
<rect x="556" y="510.6" width="137.5" height="49.5" fill="#cccccc"/>
<rect x="556" y="510.6" width="137.5" height="13" fill="#575757"/>
</g>
<text x="559.8" y="521.3" font-size="10.2" fill="#ececec" stroke="#ececec" stroke-width="0.25">水平</text>
<text x="559" y="532.3" font-size="10" fill="#1e1e1e" stroke="#1e1e1e" stroke-width="0.22" textLength="46.2" lengthAdjust="spacingAndGlyphs">400 ps/div</text>
<text x="632.3" y="532.3" font-size="10" fill="#1e1e1e" stroke="#1e1e1e" stroke-width="0.22" textLength="19" lengthAdjust="spacingAndGlyphs">4 ns</text>
<text x="559" y="545.3" font-size="10" fill="#1e1e1e" stroke="#1e1e1e" stroke-width="0.22" textLength="57.3" lengthAdjust="spacingAndGlyphs">SR: 250 GS/s</text>
<text x="632.3" y="545.3" font-size="10" fill="#1e1e1e" stroke="#1e1e1e" stroke-width="0.22" textLength="48" lengthAdjust="spacingAndGlyphs">4 ps/pt (IT)</text>
<text x="559" y="558.3" font-size="10" fill="#1e1e1e" stroke="#1e1e1e" stroke-width="0.22" textLength="44" lengthAdjust="spacingAndGlyphs">RL: 1 kpts</text>
<text x="642.6" y="558.3" font-size="10" fill="#1e1e1e" stroke="#1e1e1e" stroke-width="0.22" textLength="21" lengthAdjust="spacingAndGlyphs">50%</text>
<path d="M632.6 551H638V556.8L635.3 558.5L632.6 556.8Z" fill="#1a1a1a" stroke="#e8912e" stroke-width="0.9"/>
<path d="M633.9 552.2H636.7V553H635.7V556H634.9V553H633.9Z" fill="#eee"/>
<clipPath id="ci698"><rect x="698.2" y="510.6" width="110.2" height="49.5" rx="3.5"/></clipPath>
<g clip-path="url(#ci698)">
<rect x="698.2" y="510.6" width="110.2" height="49.5" fill="#cccccc"/>
<rect x="698.2" y="510.6" width="110.2" height="13" fill="#575757"/>
</g>
<text x="702" y="521.3" font-size="10.2" fill="#ececec" stroke="#ececec" stroke-width="0.25">触发</text>
<rect x="701.7" y="525.3" width="20" height="10" rx="3" fill="#f2e82a" stroke="#6b6418" stroke-width="1"/>
<text x="711.7" y="533.4" font-size="9.5" fill="#222" text-anchor="middle" stroke="#222" stroke-width="0.15">1</text>
<path d="M729.2 533.8L736.4 527.8L740 526.6" fill="none" stroke="#555" stroke-width="1.1"/>
<text x="746.6" y="533" font-size="10" fill="#1e1e1e" stroke="#1e1e1e" stroke-width="0.22" textLength="15.8" lengthAdjust="spacingAndGlyphs">0 V</text>
<clipPath id="ci813"><rect x="813.2" y="510.6" width="102.6" height="49.5" rx="3.5"/></clipPath>
<g clip-path="url(#ci813)">
<rect x="813.2" y="510.6" width="102.6" height="49.5" fill="#cccccc"/>
<rect x="813.2" y="510.6" width="102.6" height="13" fill="#575757"/>
</g>
<text x="817" y="521.3" font-size="10.2" fill="#ececec" stroke="#ececec" stroke-width="0.25">采集</text>
<text x="817" y="534.2" font-size="10.8" fill="#1e1e1e" stroke="#1e1e1e" stroke-width="0.15">自动，</text>
<text x="872.6" y="534.2" font-size="10.8" fill="#1e1e1e" stroke="#1e1e1e" stroke-width="0.15">分析</text>
<text x="817" y="546.8" font-size="10.5" fill="#1e1e1e" stroke="#1e1e1e" stroke-width="0.18" textLength="49.5" lengthAdjust="spacingAndGlyphs">取样: 8 bits</text>
<text x="817" y="559.6" font-size="10.5" fill="#1e1e1e" stroke="#1e1e1e" stroke-width="0.18" textLength="53.3" lengthAdjust="spacingAndGlyphs">2.042 k采集</text>
<rect x="932" y="506.6" width="63" height="25.1" rx="3" fill="#1ec41e"/>
<text x="963.7" y="523.4" font-size="9.4" fill="#ffffff" text-anchor="middle" stroke="#ffffff" stroke-width="0.4">已触发</text>
<rect x="932" y="535.4" width="61.6" height="24.6" rx="3" fill="#cdcdcd"/>
<text x="962.7" y="546.2" font-size="10.8" fill="#1e1e1e" text-anchor="middle" stroke="#1e1e1e" stroke-width="0.1" textLength="55.6" lengthAdjust="spacingAndGlyphs">20 Jan 2026</text>
<text x="962.6" y="557.1" font-size="10.8" fill="#1e1e1e" text-anchor="middle" stroke="#1e1e1e" stroke-width="0.1" textLength="57.6" lengthAdjust="spacingAndGlyphs">10:18:25 PM</text></svg>
</body></html>
